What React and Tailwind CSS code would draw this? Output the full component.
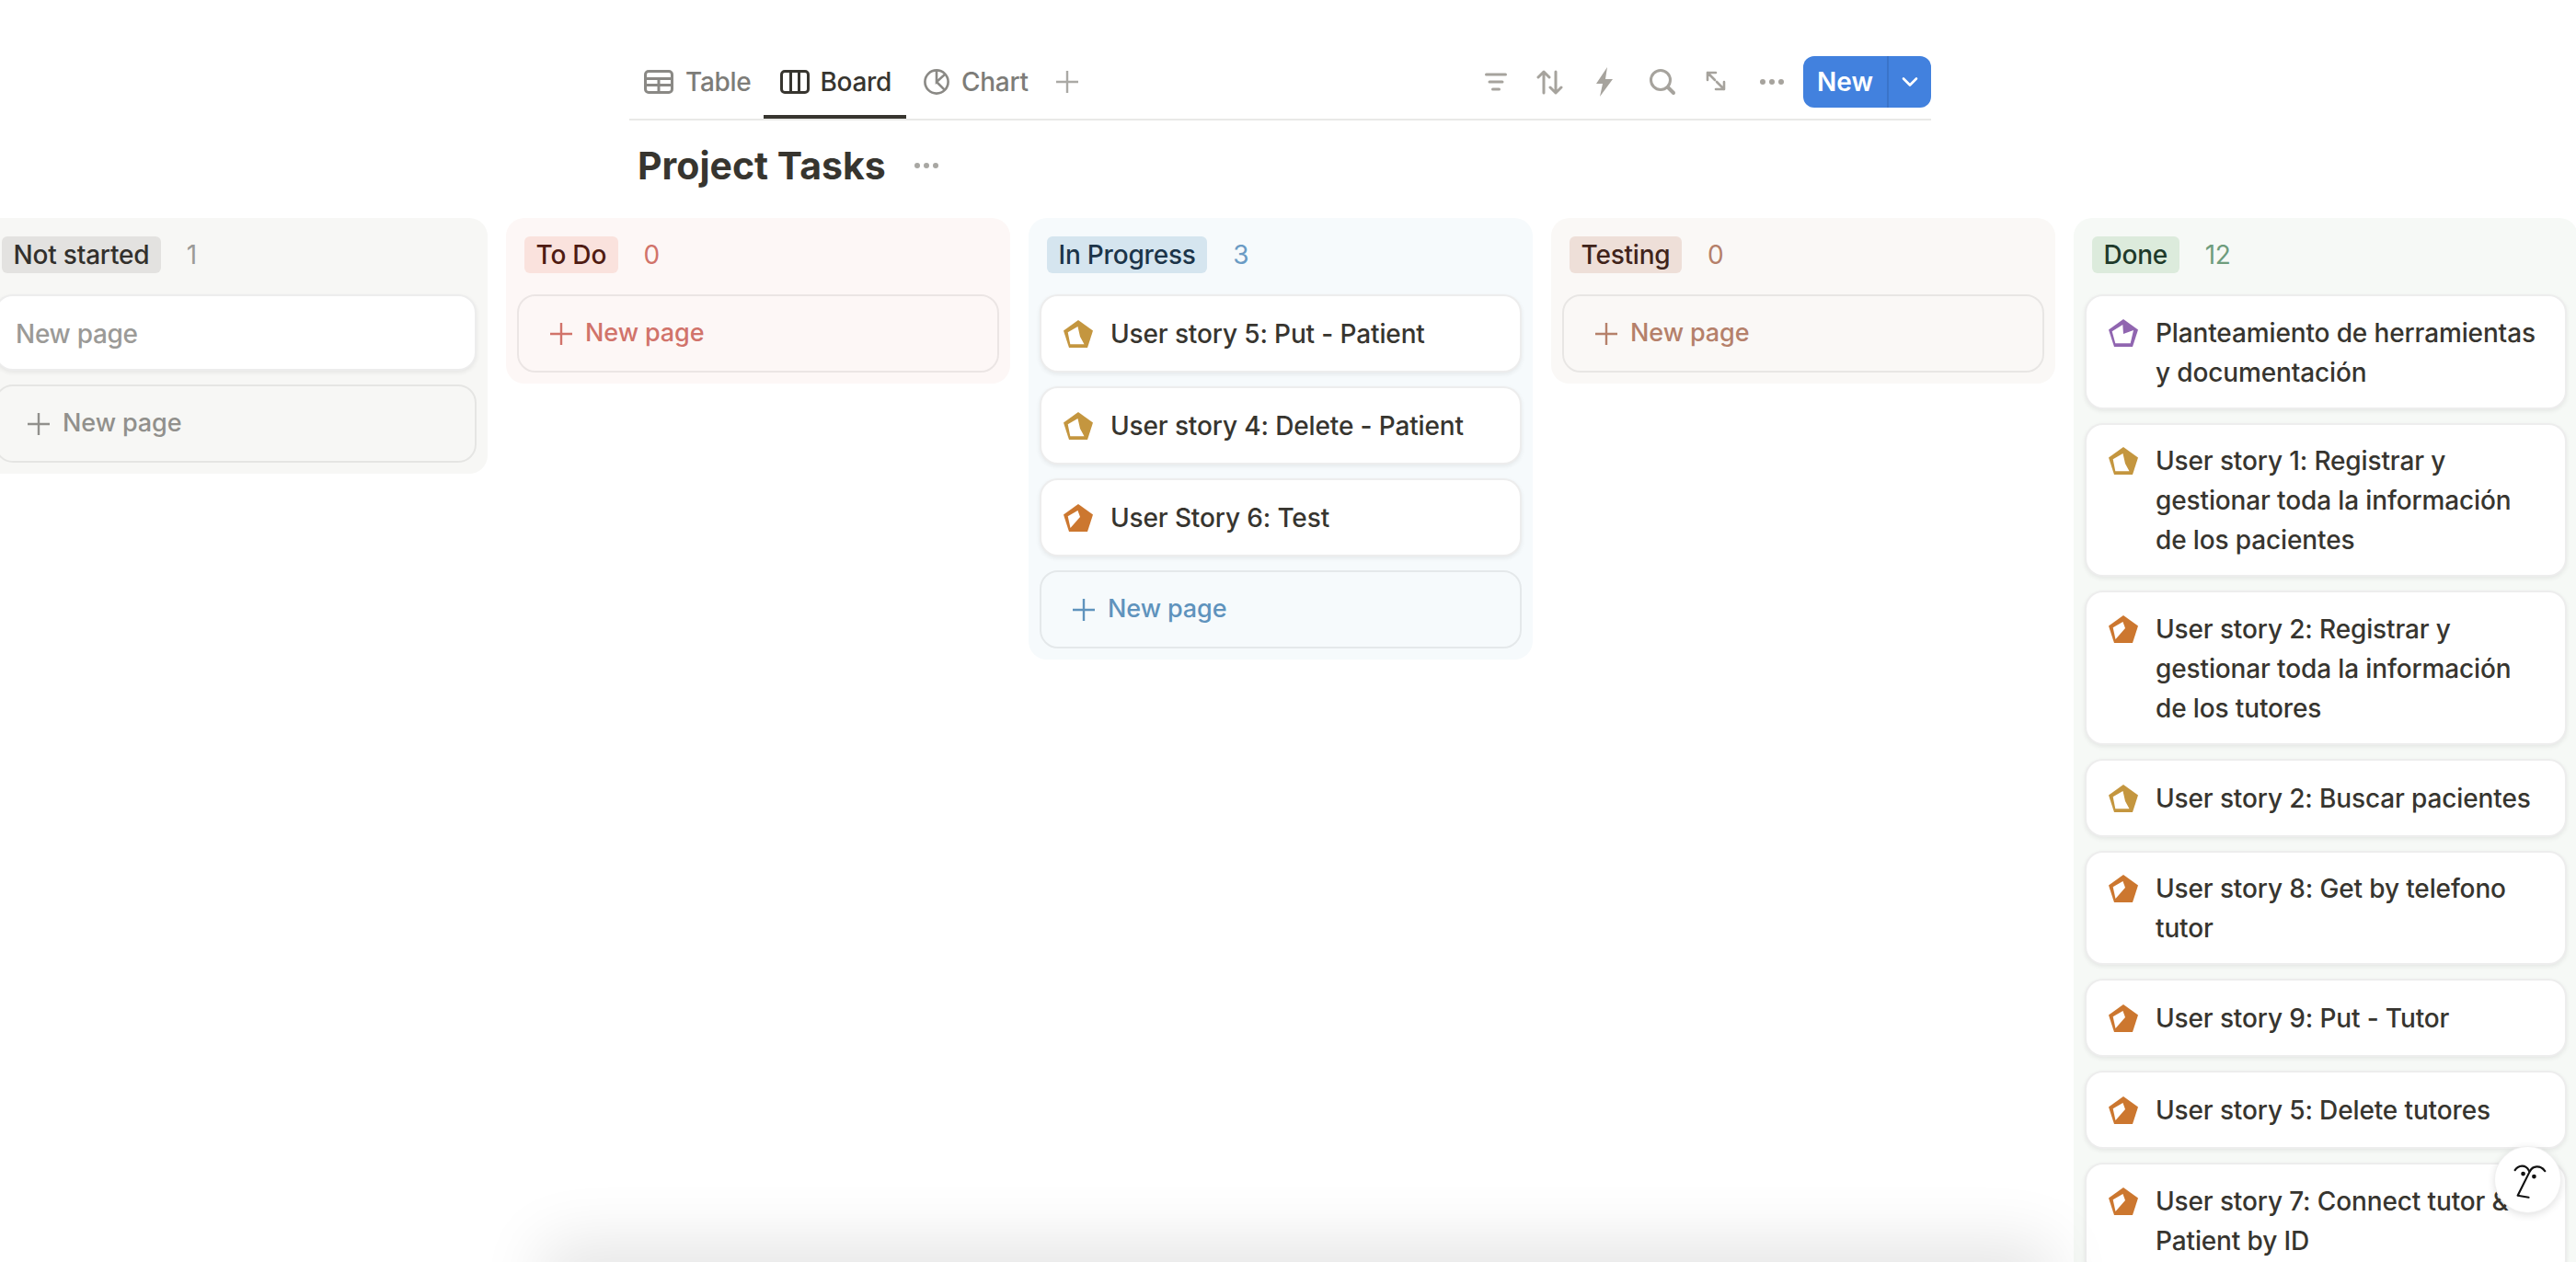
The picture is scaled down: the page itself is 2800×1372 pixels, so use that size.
import React from 'react';

const GOLD = '#c4963f';
const ORANGE = '#cc772f';
const PURPLE = '#9065b0';

const holes = {
  half: '15.5,7 18,18 22.5,26.3 7.3,26.3 4.7,13.3',
  most: '15.5,7 18,14 7.5,26 4.7,13.3',
  low: '15.3,6 16,16 27,12 23.7,26.3 7.3,26.3 3.7,13.3',
};

const Pentagon = ({ color, kind }) => (
  <svg width="32" height="30" viewBox="0 0 32 30" className="shrink-0 mt-[6px]">
    <polygon points="16,0 32,11.5 26,30 6,30 0,11.5" fill={color} />
    <polygon points={holes[kind]} fill="#fff" />
  </svg>
);

const Plus = ({ color }) => (
  <svg width="24" height="24" viewBox="0 0 24 24" className="shrink-0">
    <path d="M12 0v24M0 12h24" stroke={color} strokeWidth="2.4" fill="none" />
  </svg>
);

const Icon = ({ children, w = 30, className = '' }) => (
  <svg width={w} height="30" viewBox={`0 0 ${w} 30`} fill="none" stroke="#a6a39d" strokeWidth="3" strokeLinecap="round" strokeLinejoin="round" className={className}>
    {children}
  </svg>
);

const Dots = ({ color = '#a6a39d', className = '' }) => (
  <svg width="30" height="8" viewBox="0 0 30 8" className={className}>
    <circle cx="5" cy="4" r="3" fill={color} />
    <circle cx="15" cy="4" r="3" fill={color} />
    <circle cx="25" cy="4" r="3" fill={color} />
  </svg>
);

const columns = [
  {
    name: 'Not started', count: 1, bg: 'bg-[#f7f7f5]', tag: 'bg-[#e3e2e0] text-[#32302c]', num: 'text-[#9b9a97]',
    plus: '#91908c', add: 'text-[#91908c]', draft: true, cards: [],
  },
  {
    name: 'To Do', count: 0, bg: 'bg-[#fdf7f6]', tag: 'bg-[#fae2dd] text-[#4f1b12]', num: 'text-[#d1736a]',
    plus: '#d1736a', add: 'text-[#d1736a]', cards: [],
  },
  {
    name: 'In Progress', count: 3, bg: 'bg-[#f6fafc]', tag: 'bg-[#d5e5ef] text-[#1b3449]', num: 'text-[#6a9bc4]',
    plus: '#5f93bd', add: 'text-[#5f93bd]',
    cards: [
      { title: 'User story 5: Put - Patient', color: GOLD, kind: 'half' },
      { title: 'User story 4: Delete - Patient', color: GOLD, kind: 'half' },
      { title: 'User Story 6: Test', color: ORANGE, kind: 'most' },
    ],
  },
  {
    name: 'Testing', count: 0, bg: 'bg-[#faf8f6]', tag: 'bg-[#eedfd8] text-[#40231a]', num: 'text-[#b5806a]',
    plus: '#b5806a', add: 'text-[#b5806a]', cards: [],
  },
  {
    name: 'Done', count: 12, bg: 'bg-[#f6f9f6]', tag: 'bg-[#dcebdc] text-[#1e3a2a]', num: 'text-[#6e9d7d]',
    plus: '#6e9d7d', add: 'text-[#6e9d7d]',
    cards: [
      { title: 'Planteamiento de herramientas y documentación', color: PURPLE, kind: 'low' },
      { title: 'User story 1: Registrar y gestionar toda la información de los pacientes', color: GOLD, kind: 'half' },
      { title: 'User story 2: Registrar y gestionar toda la información de los tutores', color: ORANGE, kind: 'most' },
      { title: 'User story 2: Buscar pacientes', color: GOLD, kind: 'half' },
      { title: 'User story 8: Get by telefono tutor', color: ORANGE, kind: 'most' },
      { title: 'User story 9: Put - Tutor', color: ORANGE, kind: 'most' },
      { title: 'User story 5: Delete tutores', color: ORANGE, kind: 'most' },
      { title: 'User story 7: Connect tutor & Patient by ID', color: ORANGE, kind: 'most' },
    ],
  },
];

const cardClass = 'flex items-center rounded-[20px] border-2 border-black/[0.07] bg-white shadow-[0_2px_5px_rgba(15,15,15,0.07)]';

const Column = ({ col }) => (
  <div className={`w-[548px] shrink-0 self-start rounded-[20px] px-[12px] pb-[12px] ${col.bg}`}>
    <div className="flex items-center h-[83px] pb-[3px] pl-[8px] text-[28px] tracking-[-0.2px]">
      <span className={`h-[40px] leading-[40px] px-[12.5px] rounded-[6px] font-medium ${col.tag}`}>{col.name}</span>
      <span className={`ml-[28px] ${col.num}`}>{col.count}</span>
    </div>
    <div className="flex flex-col gap-[15px]">
      {col.draft && (
        <div className={`${cardClass} h-[83px] pt-[2px] pl-[21px] text-[28px] tracking-[-0.3px] font-medium text-[#9b9a97]`}>New page</div>
      )}
      {col.cards.map(card => (
        <div key={card.title} className={`${cardClass} min-h-[85px] pt-[18.5px] pb-[16px]`}>
          <div className="flex items-start gap-[19px] pl-[24px] pr-[20px] text-[28px] leading-[43px] tracking-[-0.13px] font-medium text-[#37352f]">
            <Pentagon color={card.color} kind={card.kind} />
            <span>{card.title}</span>
          </div>
        </div>
      ))}
      <div className={`flex items-center h-[85px] gap-[14px] pl-[34px] rounded-[20px] border-2 border-black/[0.07] text-[27px] tracking-[-0.1px] font-medium ${col.add}`}>
        <Plus color={col.plus} />
        <span>New page</span>
      </div>
    </div>
  </div>
);

const App = () => {
  return (
    <div className="relative w-[2800px] h-[1372px] overflow-hidden bg-white font-['Inter',sans-serif]">
      <div className="ml-[684px] w-[1415px]">
        <div className="flex items-stretch justify-between h-[83px] mt-[48px] border-b-2 border-[#e9e9e7]">
          <div className="flex items-stretch text-[28px] tracking-[-0.3px] font-medium text-[#7d7c78]">
            <div className="flex items-center gap-[13px] pl-[16px] pr-[14px] pt-[4px] border-b-4 border-transparent">
              <svg width="32" height="26" viewBox="0 0 32 26" fill="none" stroke="#8a8985" strokeWidth="3">
                <rect x="1.5" y="1.5" width="29" height="23" rx="3.5" />
                <path d="M1.5 9.5h29M1.5 16.5h29M16 9.5v15" />
              </svg>
              <span>Table</span>
            </div>
            <div className="flex items-center gap-[11px] pl-[18px] pr-[16px] pt-[4px] border-b-4 border-[#37352f] text-[#37352f]">
              <svg width="32" height="26" viewBox="0 0 32 26" fill="none" stroke="#37352f" strokeWidth="3">
                <rect x="1.5" y="1.5" width="29" height="23" rx="3.5" />
                <path d="M11.5 1.5v23M20.5 1.5v23" />
              </svg>
              <span>Board</span>
            </div>
            <div className="flex items-center gap-[13px] pl-[19px] pr-[18px] pt-[4px] border-b-4 border-transparent">
              <svg width="28" height="28" viewBox="0 0 30 30" fill="none" stroke="#8a8985" strokeWidth="2.8">
                <circle cx="15" cy="15" r="13.5" />
                <path d="M15 1.5V15L25 6M15 15l9 9" />
              </svg>
              <span>Chart</span>
            </div>
            <div className="flex items-center ml-[12px] pt-[4px] border-b-4 border-transparent">
              <Plus color="#aaa9a5" />
            </div>
          </div>
          <div className="flex items-center gap-[30px] pt-[1px]">
            <Icon w={24} className="mr-[0.5px]">
              <path d="M1.5 7h21M5 15h14M8.5 23h7" />
            </Icon>
            <Icon>
              <path d="M9 27V4M3 10l6-6 6 6M22 4v23M16 21l6 6 6-6" />
            </Icon>
            <svg width="20" height="32" viewBox="0 0 20 32" className="ml-[5.5px] -mr-[1px]">
              <polygon points="13,0 1,18 8,18 5,32 19,13 11,13" fill="#a6a39d" />
            </svg>
            <Icon className="ml-[8.5px]">
              <circle cx="13" cy="13" r="10.5" />
              <path d="M21 21l6 6" strokeWidth="4" />
            </Icon>
            <Icon w={28} className="-ml-[0.5px]">
              <path d="M5 13V5h9M5 5l8 8M23 15v8h-9M23 23l-8-8" strokeWidth="2.6" />
            </Icon>
            <Dots className="ml-[2px]" />
            <div className="flex items-stretch h-[56px] w-[139px] -ml-[11px] rounded-[12px] bg-[#4281de] text-white text-[28px] font-semibold">
              <div className="flex items-center justify-center w-[93px] border-r-2 border-[#3a74c9]">New</div>
              <div className="flex items-center justify-center flex-1">
                <svg width="18" height="12" viewBox="0 0 18 12" fill="none" stroke="#fff" strokeWidth="2.6" strokeLinecap="round" strokeLinejoin="round">
                  <path d="M2 2.5l7 7 7-7" />
                </svg>
              </div>
            </div>
          </div>
        </div>
        <div className="flex items-center gap-[29px] h-[48px] mt-[25px] mb-[33px] pl-[9px]">
          <h1 className="text-[41px] leading-[48px] font-bold text-[#37352f]">Project Tasks</h1>
          <Dots color="#a8a7a3" />
        </div>
      </div>
      <div className="flex gap-[20px] ml-[-18px] w-[2900px]">
        {columns.map(col => (
          <Column key={col.name} col={col} />
        ))}
      </div>
      <div className="absolute left-[610px] top-[1372px] w-[1600px] h-[40px] shadow-[0_0_70px_20px_rgba(0,0,0,0.11)]" />
      <div className="absolute left-[2711px] top-[1246px] flex items-center justify-center w-[73px] h-[73px] rounded-full bg-white border border-black/[0.06] shadow-[0_2px_8px_rgba(0,0,0,0.12)]">
        <svg width="72" height="72" viewBox="0 0 72 72" fill="none" stroke="#111" strokeWidth="2.2" strokeLinecap="round" strokeLinejoin="round">
          <path d="M22 25c3-5 12-8 16 2M38 27c3-7 12-8 17-1M38 27L25 53l12 2" />
          <circle cx="31" cy="29" r="2.4" fill="#111" stroke="none" />
          <circle cx="43" cy="32" r="2.4" fill="#111" stroke="none" />
        </svg>
      </div>
    </div>
  );
};

export default App;
